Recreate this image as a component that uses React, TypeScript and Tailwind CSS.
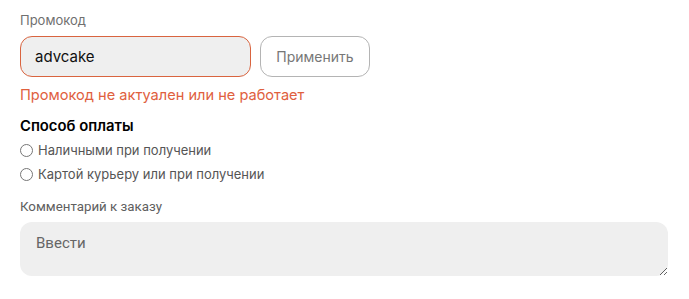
import React from "react";

function Radio({ label }: { label: string }) {
  return (
    <label className="flex items-center gap-[5px] text-[13px] leading-[16px] text-[#555]">
      <span className="h-[13px] w-[13px] rounded-full border border-[#767676] bg-white" />
      {label}
    </label>
  );
}

export default function App() {
  return (
    <div className="w-[689px] h-[299px] bg-white px-[20px] pt-[12px] font-['Inter',sans-serif]">
      <div className="text-[13px] leading-[16px] text-[#707070]">Промокод</div>
      <div className="mt-[8px] flex gap-[9px]">
        <input
          defaultValue="advcake"
          className="h-[41px] w-[231px] rounded-[12px] border border-[#d9643f] bg-[#efefef] px-[14px] text-[15px] text-[#111] outline-none"
        />
        <button className="h-[41px] w-[110px] rounded-[12px] border border-[#b4b4b4] bg-white text-[14px] text-[#777]">
          Применить
        </button>
      </div>
      <div className="mt-[9px] text-[14.6px] leading-[18px] text-[#e0603e]">
        Промокод не актуален или не работает
      </div>
      <div className="mt-[13px] text-[14.8px] font-semibold leading-[18px] text-black">
        Способ оплаты
      </div>
      <div className="mt-[7px] flex flex-col gap-[8px]">
        <Radio label="Наличными при получении" />
        <Radio label="Картой курьеру или при получении" />
      </div>
      <div className="mt-[17px] font-['Roboto',sans-serif] text-[13.3px] leading-[16px] text-[#606060]">
        Комментарий к заказу
      </div>
      <textarea
        placeholder="Ввести"
        className="mt-[7px] block h-[54px] w-[648px] rounded-[12px] bg-[#efefef] px-[16px] py-[10px] font-['Roboto',sans-serif] text-[15px] text-[#333] placeholder:text-[#666] outline-none"
      />
    </div>
  );
}
